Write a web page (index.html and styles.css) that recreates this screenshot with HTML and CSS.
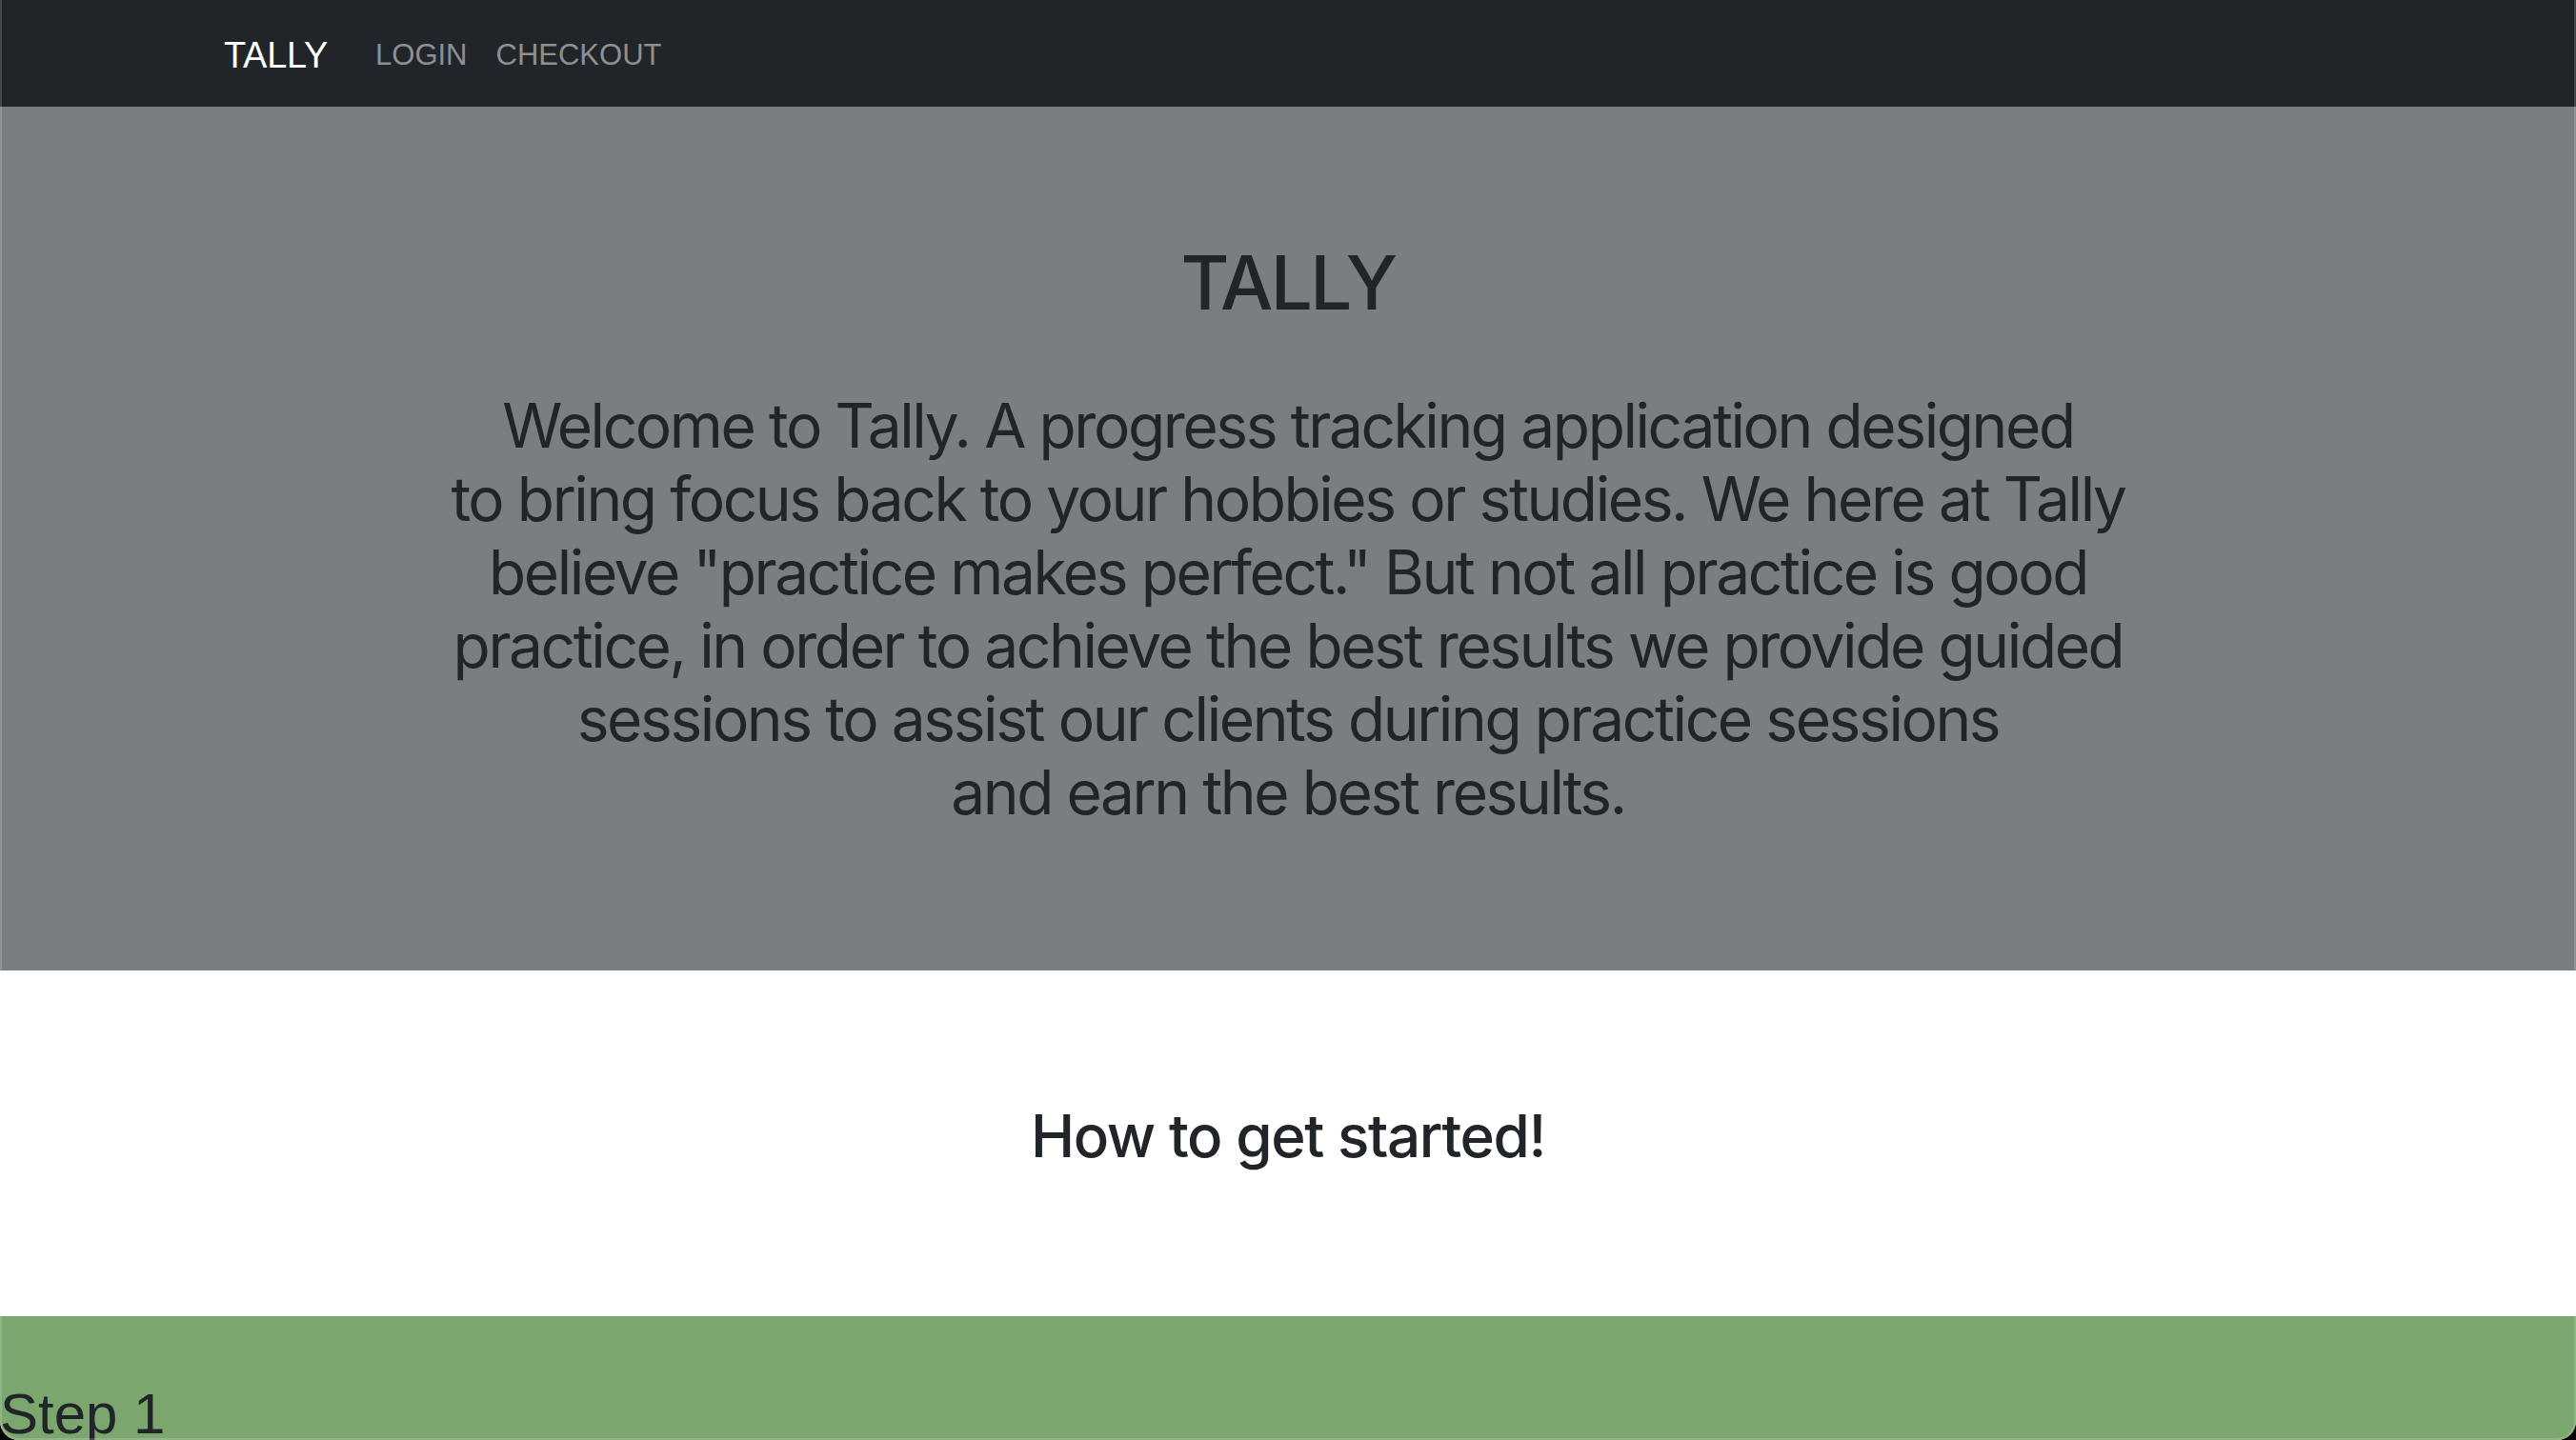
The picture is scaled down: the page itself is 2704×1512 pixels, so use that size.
FILE: index.html
```html
<!DOCTYPE html>
<html lang="en">
<head>
<meta charset="utf-8">
<title>Tally</title>
<link rel="stylesheet" href="styles.css">
</head>
<body>
<div class="window">
  <nav class="navbar">
    <a class="brand" href="#">TALLY</a>
    <a class="nav-link" href="#">LOGIN</a>
    <a class="nav-link" href="#">CHECKOUT</a>
  </nav>
  <header class="hero">
    <h1 class="hero-title">TALLY</h1>
    <p class="lead">Welcome to Tally. A progress tracking application designed<br>to bring focus back to your hobbies or studies. We here at Tally<br>believe "practice makes perfect." But not all practice is good<br>practice, in order to achieve the best results we provide guided<br>sessions to assist our clients during practice sessions<br>and earn the best results.</p>
  </header>
  <section class="intro">
    <h2 class="intro-title">How to get started!</h2>
  </section>
  <section class="step">
    <h3 class="step-title">Step 1</h3>
  </section>
</div>
</body>
</html>
```
FILE: styles.css
```css
html {
  background: #000;
}
body {
  margin: 0;
}
.window {
  height: 1512px;
  overflow: hidden;
  border-radius: 0 0 20px 20px;
  background: #fff;
  position: relative;
  display: flex;
  flex-direction: column;
}
.window::after {
  content: "";
  position: absolute;
  inset: 0;
  border: 2px solid rgba(255, 255, 255, 0.16);
  border-top: none;
  border-radius: 0 0 20px 20px;
  pointer-events: none;
}
.navbar {
  height: 112px;
  flex: none;
  box-sizing: border-box;
  background: #212529;
  padding: 5px 0 0 235px;
  display: flex;
  align-items: center;
}
.brand {
  font: 400 38px/1.5 "Liberation Sans", Arial, sans-serif;
  letter-spacing: -0.3px;
  color: #fff;
  text-decoration: none;
  margin-right: 35px;
}
.nav-link {
  font: 400 31px/1.5 "Liberation Sans", Arial, sans-serif;
  color: #8e8f91;
  text-decoration: none;
  padding: 0 15px;
}
.hero {
  height: 907px;
  flex: none;
  box-sizing: border-box;
  background: #7a7e81;
  color: #212529;
  text-align: center;
  padding-top: 138px;
}
.hero-title {
  margin: 0 0 64px;
  font: 500 78px/1.2 Inter, "Noto Sans", sans-serif;
  letter-spacing: -2.6px;
}
.lead {
  margin: 0;
  font: 400 64px/77px Inter, "Noto Sans", sans-serif;
  letter-spacing: -2.4px;
}
.intro {
  height: 363px;
  flex: none;
  box-sizing: border-box;
  text-align: center;
  padding-top: 137px;
}
.intro-title {
  margin: 0;
  font: 450 62px/1.2 Inter, "Noto Sans", sans-serif;
  letter-spacing: -1.4px;
  color: #212529;
}
.step {
  flex: 1;
  background: #7ba66d;
  padding-top: 67px;
}
.step-title {
  margin: 0;
  font: 400 60px/1.2 "Liberation Sans", Arial, sans-serif;
  color: #212529;
}
```
